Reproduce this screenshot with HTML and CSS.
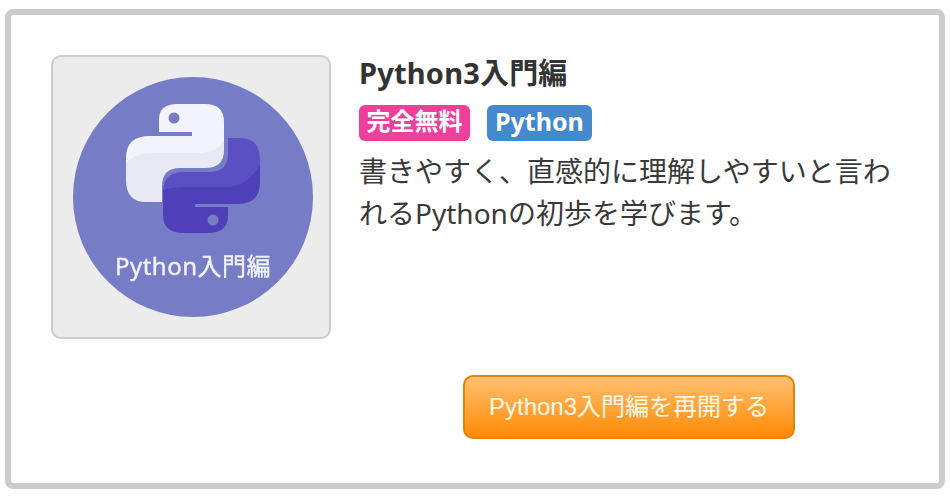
FILE: index.html
```html
<!DOCTYPE html>
<html lang="ja">
<head>
    <meta charset="UTF-8">
    <meta name="viewport" content="width=device-width, initial-scale=1.0">
    <title>Python3入門編</title>
    <link rel="stylesheet" href="styles.css">
</head>
<body>
    <div class="card">
        <div class="thumb">
            <svg class="thumb-art" viewBox="53 57 276 280" aria-label="Python入門編">
                <defs>
                    <clipPath id="white-snake">
                        <path d="M159 119Q159 104 178 104L205 104Q224 104 224 122L224 150Q224 168 205 168L180 168Q162 168 162 186L162 202L146 202Q126 202 126 180L126 158Q126 136 150 136L192 136L192 132L159 132Z"/>
                    </clipPath>
                    <clipPath id="purple-snake">
                        <path d="M228 138L240 138Q260 138 260 160L260 182Q260 204 238 204L195 204L195 207L228 207L228 216Q228 233 208 233L184 233Q163 233 163 215L163 192Q163 172 183 172L208 172Q228 172 228 154Z"/>
                    </clipPath>
                    <filter id="soft"><feGaussianBlur stdDeviation="0.5"/></filter>
                </defs>
                <circle cx="193" cy="197" r="120" fill="#767dc6"/>
                <g clip-path="url(#white-snake)" filter="url(#soft)">
                    <rect x="120" y="100" width="110" height="105" fill="#f3f4fb"/>
                    <path d="M120 172Q130 153 150 153L200 153Q218 153 228 136L228 205L120 205Z" fill="#e8e9f5"/>
                </g>
                <circle cx="174" cy="118" r="5.5" fill="#767dc6" filter="url(#soft)"/>
                <g clip-path="url(#purple-snake)" filter="url(#soft)">
                    <rect x="160" y="135" width="105" height="100" fill="#5c50c4"/>
                    <path d="M160 191Q172 187 185 187L225 187Q250 187 262 160L262 235L160 235Z" fill="#4f3fb9"/>
                </g>
                <circle cx="213" cy="220" r="5.5" fill="#767dc6" filter="url(#soft)"/>
                <text class="thumb-label" x="193" y="275" text-anchor="middle" filter="url(#soft)">Python入門編</text>
            </svg>
        </div>
        <div class="info">
            <h2 class="title">Python3入門編</h2>
            <div class="tags">
                <span class="tag tag-free">完全無料</span>
                <span class="tag tag-lang">Python</span>
            </div>
            <p class="desc">書きやすく、直感的に理解しやすいと言われるPythonの初歩を学びます。</p>
        </div>
        <div class="actions">
            <a class="resume" href="#">Python3入門編を再開する</a>
        </div>
    </div>
</body>
</html>
```

FILE: styles.css
```css
* {
    box-sizing: border-box;
}

body {
    margin: 0;
    padding: 9px 5px 7px;
    background-color: #fff;
    font-family: "Noto Sans", "Noto Sans CJK JP", sans-serif;
    color: #333;
}

.card {
    display: grid;
    grid-template-columns: 280px 540px;
    column-gap: 28px;
    row-gap: 36px;
    width: 940px;
    height: 480px;
    padding: 40px;
    border: 6px solid #ccc;
    border-radius: 8px;
    align-content: start;
}

.thumb {
    height: 284px;
    border: 2px solid #ccc;
    border-radius: 10px;
    background-color: #ececec;
}

.thumb-art {
    display: block;
    width: 100%;
    height: 100%;
}

.thumb-label {
    font-size: 24px;
    font-weight: 400;
    letter-spacing: 0.5px;
    fill: #f1f2fa;
    stroke: #f1f2fa;
    stroke-width: 0.4px;
}

.title {
    margin: -1px 0 0;
    font-size: 29px;
    line-height: 38px;
    font-weight: 700;
    letter-spacing: 0.2px;
}

.tags {
    display: flex;
    gap: 17px;
    margin-top: 13px;
}

.tag {
    padding: 0 7.5px;
    height: 36px;
    line-height: 32px;
    border-radius: 6px;
    font-size: 24px;
    font-weight: 700;
    color: #fff;
}

.tag-free {
    background-color: #ee3f9a;
}

.tag-lang {
    padding: 0 8px;
    background-color: #4489cb;
    font-size: 25px;
}

.desc {
    margin: 9px 0 0;
    font-size: 28px;
    line-height: 42px;
    color: #3a3a3a;
}

.actions {
    grid-column: 2;
    display: flex;
    justify-content: center;
}

.resume {
    width: 332px;
    height: 64px;
    line-height: 60px;
    text-align: center;
    border: 2px solid #dd850f;
    border-radius: 10px;
    background: linear-gradient(#ffbf70, #ff8b04);
    font-family: "Liberation Sans", "Noto Sans CJK JP", sans-serif;
    font-size: 24px;
    color: #fff8e8;
    text-decoration: none;
}
```
